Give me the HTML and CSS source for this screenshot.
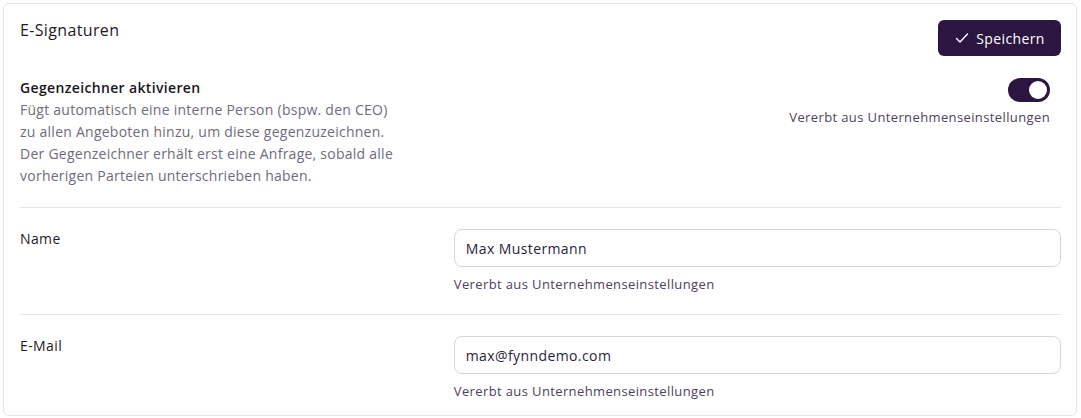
FILE: index.html
```html
<!DOCTYPE html>
<html lang="de">
<head>
<meta charset="utf-8">
<link rel="stylesheet" href="styles.css">
</head>
<body>
<div class="card">
  <div class="header">
    <h2 class="title">E-Signaturen</h2>
    <button class="save"><svg width="16" height="16" viewBox="0 0 16 16" fill="none" stroke="currentColor" stroke-width="1.4" stroke-linecap="round" stroke-linejoin="round"><path d="M2.5 8.5l3.5 3.5 7.5-8"/></svg><span>Speichern</span></button>
  </div>
  <div class="section toggle-row">
    <div class="desc">
      <div class="label-bold">Gegenzeichner aktivieren</div>
      <p class="text">Fügt automatisch eine interne Person (bspw. den CEO)<br>zu allen Angeboten hinzu, um diese gegenzuzeichnen.<br>Der Gegenzeichner erhält erst eine Anfrage, sobald alle<br>vorherigen Parteien unterschrieben haben.</p>
    </div>
    <div class="toggle-col">
      <div class="switch"><div class="knob"></div></div>
      <div class="hint">Vererbt aus Unternehmenseinstellungen</div>
    </div>
  </div>
  <div class="section field-row">
    <div class="label">Name</div>
    <div class="field">
      <div class="input">Max Mustermann</div>
      <div class="hint">Vererbt aus Unternehmenseinstellungen</div>
    </div>
  </div>
  <div class="section field-row last">
    <div class="label">E-Mail</div>
    <div class="field">
      <div class="input">max@fynndemo.com</div>
      <div class="hint">Vererbt aus Unternehmenseinstellungen</div>
    </div>
  </div>
</div>
</body>
</html>
```
FILE: styles.css
```css
* { box-sizing: border-box; }
html, body { margin: 0; background: #ffffff; }
body {
  padding: 3px 4px 3px 3px;
  font-family: "Open Sans", "Noto Sans", sans-serif;
  color: #1c1726;
}
.card {
  border: 1px solid #e4e4ea;
  border-radius: 6px;
  padding: 16px 15px 15px 16px;
  background: #fff;
}
.header {
  display: flex;
  justify-content: space-between;
  align-items: flex-start;
}
.title {
  margin: 0;
  font-size: 16px;
  font-weight: 500;
  line-height: 20px;
  letter-spacing: 0.35px;
  color: #1f1a29;
}
.save {
  display: flex;
  align-items: center;
  gap: 6px;
  height: 36px;
  width: 123px;
  justify-content: center;
  border: none;
  border-radius: 6px;
  background: #2a1640;
  color: #fff;
  font-family: inherit;
  font-size: 14px;
  letter-spacing: 0.4px;
  padding: 0 12px;
}
.section {
  padding: 21px 0 20px;
}
.field-row, .section + .section {
  border-top: 1px solid #e4e4ea;
}
.field-row { padding: 21px 0 21px; }
.field-row.last { padding-bottom: 0; }
.toggle-row {
  display: flex;
  justify-content: space-between;
  align-items: flex-start;
}
.desc { width: 420px; }
.label-bold {
  font-size: 14px;
  font-weight: 600;
  line-height: 22px;
  letter-spacing: 0.35px;
  color: #1a1523;
}
.text {
  margin: 0;
  font-size: 14px;
  line-height: 22px;
  letter-spacing: 0.25px;
  color: #6f6b7b;
}
.toggle-col {
  display: flex;
  flex-direction: column;
  align-items: flex-end;
  padding-top: 1px;
  padding-right: 11px;
}
.switch {
  width: 42px;
  height: 24px;
  border-radius: 12px;
  background: #2a1640;
  padding: 3px;
  display: flex;
  justify-content: flex-end;
}
.knob {
  width: 18px;
  height: 18px;
  border-radius: 50%;
  background: #fff;
}
.toggle-col .hint { margin-top: 6px; }
.hint {
  font-size: 13px;
  line-height: 18px;
  letter-spacing: 0.38px;
  color: #4e4160;
}
.field-row {
  display: grid;
  grid-template-columns: 5fr 7fr;
}
.label {
  font-size: 14px;
  line-height: 20px;
  letter-spacing: 0.4px;
  color: #1f1a29;
}
.input {
  height: 38px;
  border: 1px solid #d3d5e1;
  border-radius: 8px;
  padding: 0 11px;
  display: flex;
  align-items: center;
  font-size: 14px;
  letter-spacing: 0.4px;
  color: #2a1d3d;
}
.field .hint { margin-top: 8px; }
```
